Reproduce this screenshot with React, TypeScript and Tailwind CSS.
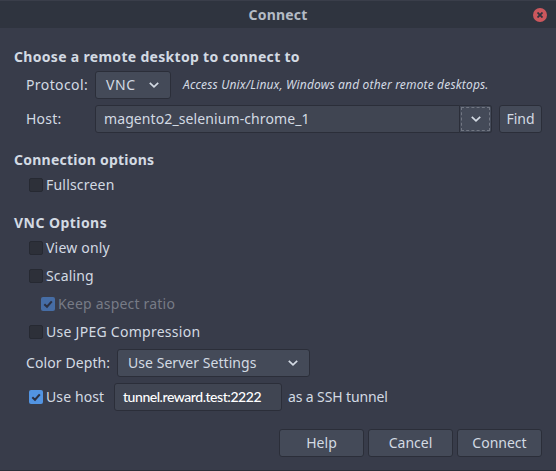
import React from "react";

function Chevron() {
  return (
    <svg width="10" height="6" viewBox="0 0 10 6" fill="none" className="shrink-0">
      <path d="M0.8 0.8 5 4.8 9.2 0.8" stroke="#d3dae3" strokeWidth="1.7" />
    </svg>
  );
}

function Box({ checked, disabled }: { checked?: boolean; disabled?: boolean }) {
  if (!checked) {
    return <span className="block size-[14px] shrink-0 rounded-[2px] border border-[#262932] bg-[#2d3039]" />;
  }
  return (
    <span className={`block size-[14px] shrink-0 rounded-[2px] ${disabled ? "bg-[#466da5]" : "bg-[#5294e2]"}`}>
      <svg width="14" height="14" viewBox="0 0 14 14" fill="none">
        <path d="M3.3 7.2 6 9.7 10.8 4.4" stroke="#2c3142" strokeWidth="2.1" />
      </svg>
    </span>
  );
}

function Check({ label, text, indent, checked, disabled }: { label: string; text: string; indent?: boolean; checked?: boolean; disabled?: boolean }) {
  return (
    <label className={`flex h-7 items-center gap-[3px] ${indent ? "pl-[27px]" : "pl-[15px]"} ${disabled ? "text-[#777b86]" : ""}`}>
      <Box checked={checked} disabled={disabled} />
      <span className={text}>{label}</span>
    </label>
  );
}

function Button({ label, size }: { label: string; size: string }) {
  return (
    <button className={`flex h-7 items-center justify-center rounded-[3px] border border-[#2b2e39] bg-[#444a58] ${size}`}>
      {label}
    </button>
  );
}

export default function App() {
  return (
    <div className="flex h-[471px] w-[556px] flex-col overflow-hidden border-b border-[#2b2e39] bg-[#383c4a] font-['Noto_Sans',sans-serif] text-[14px] leading-5 whitespace-nowrap text-[#d3dae3]">
      <header className="grid h-7 shrink-0 grid-cols-[1fr_auto_1fr] items-center border-t border-[#3a3e4a] bg-[#2f343f]">
        <span />
        <span className="font-bold tracking-[0.2px] text-[#b4bbc5]">Connect</span>
        <button className="mr-[9px] flex size-[14px] items-center justify-center justify-self-end rounded-full bg-[#cc575d]">
          <svg width="6" height="6" viewBox="0 0 6 6">
            <path d="M0.5 0.5 5.5 5.5M5.5 0.5 0.5 5.5" stroke="#2f343f" strokeWidth="1.8" />
          </svg>
        </button>
      </header>
      <main className="flex flex-col pt-[15px] pr-[14px] pl-[14px]">
        <h2 className="flex h-7 items-center font-bold"><span className="tracking-[0.31px]">Choose a remote desktop to connect to</span></h2>
        <div className="flex h-7 items-center pl-3">
          <span className="w-[69px] tracking-[0.4px]">Protocol:</span>
          <button className="flex h-7 w-[76px] items-center justify-between rounded-[3px] border border-[#2b2e39] bg-[#444a58] pr-[11px] pl-[10px]">
            <span className="tracking-[0.6px]">VNC</span>
            <Chevron />
          </button>
          <span className="ml-3 text-[12px] tracking-[0.16px] italic">Access Unix/Linux, Windows and other remote desktops.</span>
        </div>
        <div className="mt-1.5 flex h-7 items-center pl-3">
          <span className="w-[69px] tracking-[0.2px]">Host:</span>
          <div className="flex h-7 w-[365px] items-center rounded-l-[3px] border border-[#2b2e39] bg-[#404552] pl-2">
            <span className="tracking-[0.1px]">magento2_selenium-chrome_1</span>
          </div>
          <button className="flex h-7 w-8 items-center rounded-r-[3px] border border-l-0 border-[#2b2e39] bg-[#444a58] p-px">
            <span className="flex h-6 w-full items-center justify-center border border-dashed border-[#717682]"><Chevron /></span>
          </button>
          <span className="w-[7px]" />
          <Button label="Find" size="w-[43px]" />
        </div>
        <h2 className="mt-4 flex h-[22px] items-center font-bold"><span className="tracking-[0.24px]">Connection options</span></h2>
        <Check label="Fullscreen" text="tracking-[0.2px]" />
        <h2 className="mt-[13px] flex h-[22px] items-center font-bold"><span className="tracking-[0.45px]">VNC Options</span></h2>
        <Check label="View only" text="tracking-[0.2px]" />
        <Check label="Scaling" text="tracking-[0.15px]" />
        <Check label="Keep aspect ratio" text="tracking-[0.2px]" indent checked disabled />
        <Check label="Use JPEG Compression" text="tracking-[0.27px]" />
        <div className="mt-[3px] flex h-7 items-center pl-3">
          <span className="w-[91px] tracking-[0.1px]">Color Depth:</span>
          <button className="flex h-7 w-[193px] items-center justify-between rounded-[3px] border border-[#2b2e39] bg-[#444a58] pr-[11px] pl-[10px]">
            <span className="tracking-[0.05px]">Use Server Settings</span>
            <Chevron />
          </button>
        </div>
        <div className="mt-1.5 flex h-7 items-center">
          <div className="w-[100px]"><Check label="Use host" text="tracking-[0.1px]" checked /></div>
          <div className="flex h-7 w-[168px] items-center rounded-[3px] border border-[#2b2e39] bg-[#404552] pl-2 font-['Lato','Noto_Sans',sans-serif] font-medium text-white">
            <span className="tracking-[-0.45px]">tunnel.reward.test:2222</span>
          </div>
          <span className="ml-1.5 tracking-[-0.12px]">as a SSH tunnel</span>
        </div>
        <footer className="mt-[18px] flex justify-end gap-1">
          <Button label="Help" size="w-[85px]" />
          <Button label="Cancel" size="w-[85px]" />
          <Button label="Connect" size="w-[85px]" />
        </footer>
      </main>
    </div>
  );
}
